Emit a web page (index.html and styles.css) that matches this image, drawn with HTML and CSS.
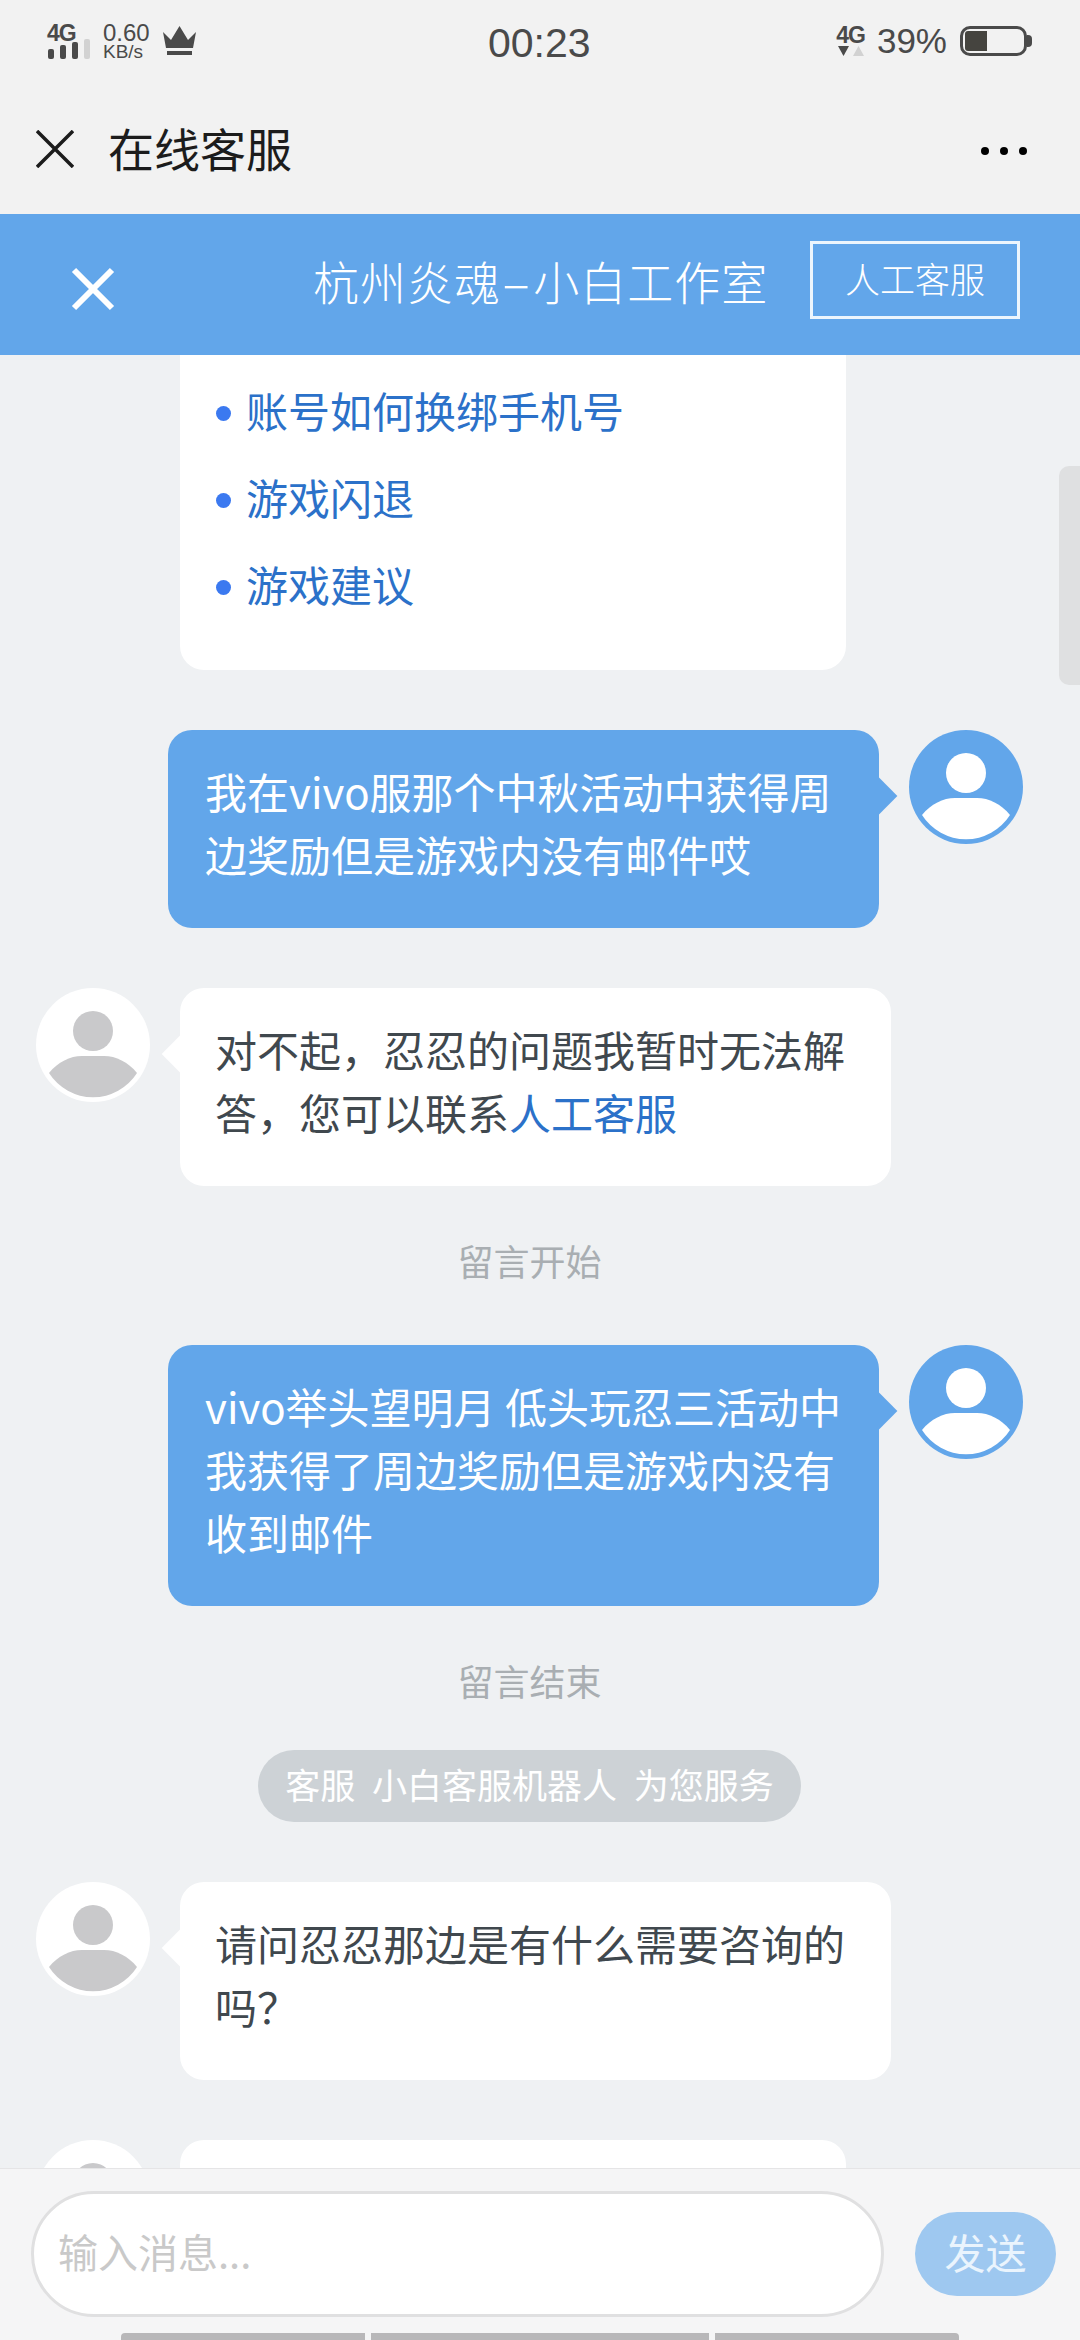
FILE: index.html
```html
<!DOCTYPE html>
<html lang="zh">

<head>
    <meta charset="UTF-8">
    <meta name="viewport" content="width=device-width, initial-scale=1.0">
    <title>在线客服</title>
    <link rel="stylesheet" href="styles.css">
</head>

<body>
    <!-- phone status bar -->
    <div class="status-bar">
        <div class="status-left">
            <div class="net-signal">
                <span class="net-label">4G</span>
                <svg class="signal-bars" width="44" height="20" viewBox="0 0 44 20">
                    <rect x="1" y="10" width="6" height="10" rx="2" fill="#4a4a4a"/>
                    <rect x="13" y="6" width="6" height="14" rx="2" fill="#4a4a4a"/>
                    <rect x="25" y="3" width="6" height="17" rx="2" fill="#4a4a4a"/>
                    <rect x="37" y="0" width="6" height="20" rx="2" fill="#d2d2d2"/>
                </svg>
            </div>
            <div class="net-speed">
                <span class="speed-num">0.60</span>
                <span class="speed-unit">KB/s</span>
            </div>
            <svg class="crown" width="33" height="30" viewBox="0 0 33 30">
                <path d="M0 6 L8 14 L16.500 0 L25 14 L33 6 L30 22 H3 Z" fill="#4a4a4a"/>
                <rect x="4" y="25" width="25" height="4" fill="#4a4a4a"/>
            </svg>
        </div>
        <div class="status-time">00:23</div>
        <div class="status-right">
            <div class="net-arrows">
                <span class="net-label">4G</span>
                <svg width="28" height="10" viewBox="0 0 28 10">
                    <path d="M2 0 H13 L7.500 10 Z" fill="#4a4a4a"/>
                    <path d="M17 10 H28 L22.500 0 Z" fill="#d2d2d2"/>
                </svg>
            </div>
            <span class="battery-num">39%</span>
            <div class="battery">
                <div class="battery-fill"></div>
            </div>
        </div>
    </div>

    <!-- webview title -->
    <div class="nav-bar">
        <svg width="38" height="38" viewBox="0 0 38 38">
            <path d="M1 1 L37 37 M37 1 L1 37" stroke="#1c1c1c" stroke-width="3.500" fill="none"/>
        </svg>
        <div class="nav-title">在线客服</div>
        <div class="nav-dots"><i></i><i></i><i></i></div>
    </div>

    <!-- blue header -->
    <div class="chat-header">
        <svg class="header-close" width="44" height="44" viewBox="0 0 44 44">
            <path d="M3 3 L41 41 M41 3 L3 41" stroke="#fff" stroke-width="6" fill="none"/>
        </svg>
        <div class="header-title">杭州炎魂<span class="dash">-</span>小白工作室</div>
        <div class="header-btn">人工客服</div>
    </div>

    <div class="chat-body">
        <div class="scroll-thumb"></div>

        <div class="faq-card">
            <div class="faq-item">账号如何换绑手机号</div>
            <div class="faq-item">游戏闪退</div>
            <div class="faq-item">游戏建议</div>
        </div>

        <div class="msg msg-user">
            <div class="bubble">我在vivo服那个中秋活动中获得周边奖励但是游戏内没有邮件哎</div>
            <svg class="avatar" viewBox="0 0 114 114">
                <circle cx="57" cy="57" r="57" fill="#62a6ea"/>
                <circle cx="57" cy="43" r="20" fill="#fff"/>
                <path d="M13 85 C22 74 34 68 46 68 H68 C80 68 92 74 101 85 A52 52 0 0 1 13 85 Z" fill="#fff"/>
            </svg>
        </div>

        <div class="msg msg-bot">
            <svg class="avatar" viewBox="0 0 114 114">
                <circle cx="57" cy="57" r="57" fill="#fff"/>
                <circle cx="57" cy="43" r="20" fill="#c9c9cb"/>
                <path d="M13 85 C22 74 34 68 46 68 H68 C80 68 92 74 101 85 A52 52 0 0 1 13 85 Z" fill="#c9c9cb"/>
            </svg>
            <div class="bubble">对不起，忍忍的问题我暂时无法解答，您可以联系<span class="link">人工客服</span></div>
        </div>

        <div class="note">留言开始</div>

        <div class="msg msg-user msg-after-note">
            <div class="bubble">vivo举头望明月 低头玩忍三活动中我获得了周边奖励但是游戏内没有收到邮件</div>
            <svg class="avatar" viewBox="0 0 114 114">
                <circle cx="57" cy="57" r="57" fill="#62a6ea"/>
                <circle cx="57" cy="43" r="20" fill="#fff"/>
                <path d="M13 85 C22 74 34 68 46 68 H68 C80 68 92 74 101 85 A52 52 0 0 1 13 85 Z" fill="#fff"/>
            </svg>
        </div>

        <div class="note">留言结束</div>

        <div class="service-pill">客服 小白客服机器人 为您服务</div>

        <div class="msg msg-bot">
            <svg class="avatar" viewBox="0 0 114 114">
                <circle cx="57" cy="57" r="57" fill="#fff"/>
                <circle cx="57" cy="43" r="20" fill="#c9c9cb"/>
                <path d="M13 85 C22 74 34 68 46 68 H68 C80 68 92 74 101 85 A52 52 0 0 1 13 85 Z" fill="#c9c9cb"/>
            </svg>
            <div class="bubble">请问忍忍那边是有什么需要咨询的吗？</div>
        </div>

        <div class="msg msg-bot msg-cut">
            <svg class="avatar" viewBox="0 0 114 114">
                <circle cx="57" cy="57" r="57" fill="#fff"/>
                <circle cx="57" cy="43" r="20" fill="#c9c9cb"/>
            </svg>
            <div class="bubble"></div>
        </div>
    </div>

    <!-- message input -->
    <div class="input-bar">
        <div class="input-row">
            <div class="input-box">输入消息...</div>
            <div class="send-btn">发送</div>
        </div>
        <div class="sys-bars"><i></i><i></i><i></i></div>
    </div>
</body>

</html>
```

FILE: styles.css
```css
* {
    margin: 0px;
    padding: 0px;
    box-sizing: border-box;
}

html,
body {
    height: 100%;
}

body {
    display: flex;
    flex-direction: column;
    overflow: hidden;
    font-family: "Noto Sans CJK SC", "Noto Sans", sans-serif;
    background-color: #eff1f3;
}

/* status bar */
.status-bar {
    height: 96px;
    flex-shrink: 0;
    display: flex;
    align-items: center;
    justify-content: space-between;
    padding: 0px 53px 14px 47px;
    position: relative;
    background-color: #f2f2f2;
    color: #4a4a4a;
    font-family: "Liberation Sans", sans-serif;
}

.status-left,
.status-right {
    display: flex;
    align-items: center;
}

.net-signal,
.net-arrows {
    display: flex;
    flex-direction: column;
}

.net-label {
    font-size: 23px;
    line-height: 18px;
    font-weight: 700;
    letter-spacing: -1px;
}

.signal-bars {
    margin-top: -3px;
}

.net-speed {
    display: flex;
    flex-direction: column;
    margin: 0px 13px 0px 12px;
}

.speed-num {
    font-size: 24px;
    line-height: 22px;
}

.speed-unit {
    font-size: 19px;
    line-height: 16px;
}

.status-time {
    position: absolute;
    left: 488px;
    top: 21px;
    font-size: 41px;
    line-height: 44px;
}

.net-arrows svg {
    margin-top: 2px;
}

.battery-num {
    font-size: 35px;
    margin: 0px 13px 0px 12px;
}

.battery {
    position: relative;
    width: 67px;
    height: 30px;
    border: 3px solid #4a4a4a;
    border-radius: 10px;
    padding: 2px;
}

.battery::after {
    content: '';
    position: absolute;
    right: -8px;
    top: 6px;
    width: 5px;
    height: 12px;
    background-color: #4a4a4a;
    border-radius: 0px 4px 4px 0px;
}

.battery-fill {
    width: 22px;
    height: 100%;
    background-color: #45443f;
    border-radius: 3px 0px 0px 3px;
}

/* webview title */
.nav-bar {
    height: 118px;
    flex-shrink: 0;
    display: flex;
    align-items: center;
    padding: 0px 53px 13px 36px;
    background-color: #f2f2f2;
}

.nav-title {
    margin: 0px 0px 4px 34px;
    flex: 1;
    font-size: 46px;
    color: #1c1c1c;
}

.nav-dots {
    display: flex;
    gap: 11px;
    margin-top: 5px;
}

.nav-dots i {
    width: 8px;
    height: 8px;
    border-radius: 50%;
    background-color: #000;
}

/* blue header */
.chat-header {
    height: 141px;
    flex-shrink: 0;
    display: flex;
    align-items: center;
    padding: 0px 60px 0px 71px;
    background-color: #62a6ea;
    color: #fff;
}

.header-close {
    margin-top: 8px;
}

.header-title {
    flex: 1;
    margin: 0px 0px 10px 198px;
    font-size: 46px;
    font-weight: 300;
    letter-spacing: 1px;
    white-space: nowrap;
}

.dash {
    display: inline-block;
    margin: 0px 8px;
    transform: scaleX(2);
}

.header-btn {
    width: 210px;
    height: 78px;
    line-height: 68px;
    text-align: center;
    border: 3px solid #ecf5fd;
    font-size: 35px;
    font-weight: 300;
    margin-bottom: 10px;
}

/* chat list */
.chat-body {
    flex: 1;
    min-height: 0;
    position: relative;
    overflow: hidden;
    padding-right: 21px;
    font-size: 42px;
    line-height: 63px;
    color: #40484e;
}

.scroll-thumb {
    position: absolute;
    right: 0px;
    top: 111px;
    width: 21px;
    height: 219px;
    border-radius: 10px 0px 0px 10px;
    background-color: #dfe0e1;
}

.faq-card {
    width: 666px;
    margin-left: 180px;
    padding: 14px 36px 40px;
    background-color: #fff;
    border-radius: 0px 0px 24px 24px;
}

.faq-item {
    position: relative;
    height: 87px;
    line-height: 81px;
    padding-left: 30px;
    color: #2b71c9;
}

.faq-item::before {
    content: '';
    position: absolute;
    left: 0px;
    top: 37px;
    width: 15px;
    height: 15px;
    border-radius: 50%;
    background-color: #3b79f0;
}

.msg {
    display: flex;
    align-items: flex-start;
    gap: 30px;
    margin-top: 60px;
}

.msg-user {
    justify-content: flex-end;
    padding-right: 36px;
}

.msg-bot {
    padding-left: 36px;
}

.msg-after-note {
    margin-top: 55px;
}

.avatar {
    width: 114px;
    height: 114px;
    flex-shrink: 0;
}

.bubble {
    position: relative;
    width: 711px;
    padding: 29px 30px 43px 37px;
    border-radius: 24px;
    background-color: #fff;
}

.bubble::before {
    content: '';
    position: absolute;
    top: 53px;
    width: 26px;
    height: 26px;
    transform: rotate(45deg);
    background-color: inherit;
}

.msg-user .bubble {
    background-color: #62a6ea;
    color: #fff;
}

.msg-user .bubble::before {
    right: -13px;
}

.msg-bot .bubble::before {
    left: -13px;
}

.msg-bot .bubble {
    padding-left: 35px;
}

.msg-cut .bubble {
    width: 666px;
    height: 120px;
}

.link {
    color: #2b71c9;
}

.note {
    height: 57px;
    margin-top: 47px;
    line-height: 54px;
    text-align: center;
    font-size: 36px;
    color: #a9aeb2;
}

.service-pill {
    width: fit-content;
    height: 72px;
    margin: 40px auto 0px;
    padding: 0px 27px;
    line-height: 68px;
    border-radius: 36px;
    font-size: 35px;
    word-spacing: 9px;
    color: #fff;
    background-color: #cdd2d6;
}

/* message input */
.input-bar {
    height: 172px;
    flex-shrink: 0;
    position: relative;
    padding: 22px 24px 0px 31px;
    border-top: 1px solid #e5e5e6;
    background-color: #f5f5f6;
}

.input-row {
    display: flex;
    align-items: center;
    justify-content: space-between;
}

.input-box {
    width: 853px;
    height: 126px;
    padding-left: 24px;
    line-height: 114px;
    border: 3px solid #e0e0e1;
    border-radius: 63px;
    font-size: 40px;
    color: #c9c9c9;
    background-color: #fff;
}

.send-btn {
    width: 141px;
    height: 84px;
    line-height: 78px;
    text-align: center;
    border-radius: 42px;
    font-size: 41px;
    color: #eaf4fd;
    background-color: #9ec8f0;
}

.sys-bars {
    position: absolute;
    left: 121px;
    bottom: 0px;
    display: flex;
    gap: 6px;
}

.sys-bars i {
    height: 7px;
    background-color: #b8b7b9;
}

.sys-bars i:nth-child(1) {
    width: 244px;
    border-radius: 4px 0px 0px 0px;
}

.sys-bars i:nth-child(2) {
    width: 338px;
}

.sys-bars i:nth-child(3) {
    width: 244px;
    border-radius: 0px 4px 0px 0px;
}
```
